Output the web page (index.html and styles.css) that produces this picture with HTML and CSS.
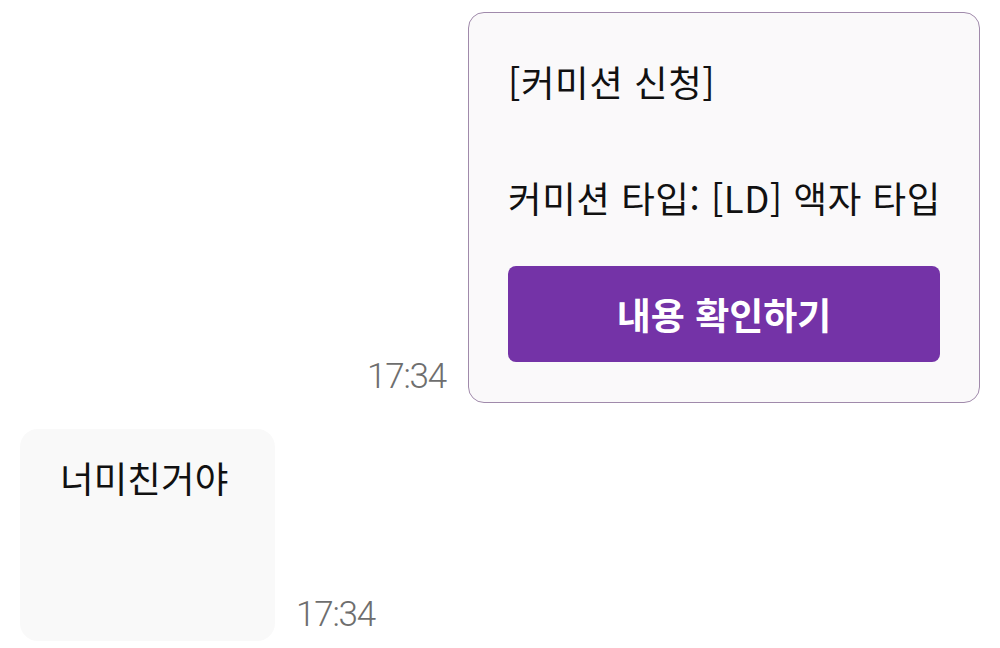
FILE: index.html
```html
<!DOCTYPE html>
<html lang="ko">
<head>
<meta charset="utf-8">
<link rel="stylesheet" href="styles.css">
</head>
<body>
<div class="chat">
  <div class="row row-out">
    <span class="time">17:34</span>
    <div class="card">
      <p class="card-text">[커미션 신청]</p>
      <p class="card-text card-gap">커미션 타입: [LD] 액자 타입</p>
      <button class="btn">내용 확인하기</button>
    </div>
  </div>
  <div class="row row-in">
    <div class="bubble">
      <p class="bubble-text">너미친거야</p>
    </div>
    <span class="time">17:34</span>
  </div>
</div>
</body>
</html>
```

FILE: styles.css
```css
* { box-sizing: border-box; }
html, body { margin: 0; padding: 0; background: #ffffff; }
body {
  width: 1000px;
  height: 648px;
  overflow: hidden;
  font-family: "Noto Sans CJK KR", "Noto Sans", sans-serif;
  color: #111111;
}
.chat {
  display: flex;
  flex-direction: column;
  gap: 26px;
  padding: 12px 20px 0 20px;
}
.row {
  display: flex;
  align-items: flex-end;
  gap: 22px;
}
.row-out { justify-content: flex-end; }
.row-in { justify-content: flex-start; gap: 21px; }
.time {
  font-family: Roboto, "Noto Sans", sans-serif;
  font-weight: 300;
  font-size: 35px;
  line-height: 1;
  letter-spacing: -1.2px;
  color: #6e6e6e;
  margin-bottom: 9px;
}
.card {
  width: 512px;
  border: 1.5px solid #a08aab;
  border-radius: 16px;
  background: #faf9fa;
  padding: 40px 39px 40px 39px;
  display: flex;
  flex-direction: column;
}
.card-text {
  margin: 0;
  font-size: 36.5px;
  letter-spacing: 0.55px;
  line-height: 58px;
  white-space: nowrap;
}
.card-gap { margin-top: 58px; }
.btn {
  margin-top: 39px;
  height: 96px;
  border: none;
  border-radius: 8px;
  background: #7433a7;
  color: #ffffff;
  font-family: "Noto Sans CJK KR", "Noto Sans", sans-serif;
  font-weight: 700;
  font-size: 37px;
  padding: 0;
}
.bubble {
  width: 255px;
  height: 212px;
  border-radius: 18px;
  background: #f9f9f9;
  padding: 20px 20px 0 40px;
}
.bubble-text {
  margin: 0;
  font-size: 36.5px;
  letter-spacing: 0.1px;
  line-height: 58px;
  white-space: nowrap;
}
```
